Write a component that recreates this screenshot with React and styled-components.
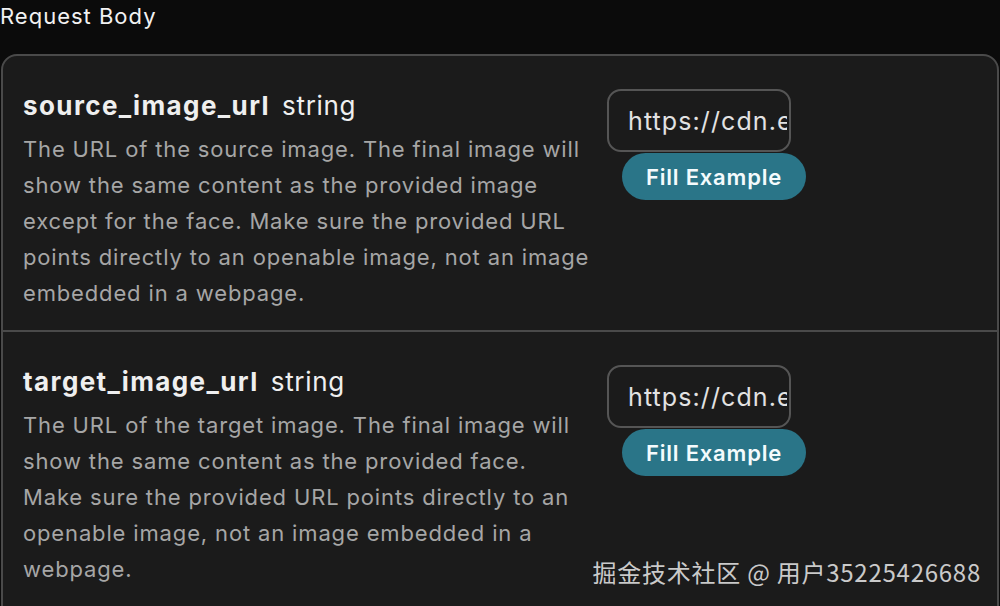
import React from "react";
import styled, { createGlobalStyle } from "styled-components";

const Global = createGlobalStyle`
  html, body { margin: 0; padding: 0; background: #0b0b0b; }
  body { font-family: Inter, "Noto Sans", sans-serif; overflow: hidden; }
  * { box-sizing: border-box; }
`;

const Page = styled.div`
  position: relative;
  width: 1000px;
  height: 606px;
  overflow: hidden;
  background: #0b0b0b;
  padding: 0 1px;
`;

const Heading = styled.div`
  font-size: 22px;
  line-height: 32px;
  letter-spacing: 1px;
  color: #f2f2f2;
  margin-left: -1px;
  margin-bottom: 22px;
`;

const Card = styled.div`
  background: #1b1b1b;
  border: 2px solid #4a4a4a;
  border-radius: 16px;
  overflow: hidden;
  min-height: 640px;
`;

const Row = styled.div`
  display: flex;
  align-items: flex-start;
  gap: 10px;
  padding: 33px 20px 19px 20px;
  & + & { border-top: 2px solid #4a4a4a; }
`;

const Info = styled.div`
  width: 574px;
  flex: none;
`;

const TitleLine = styled.div`
  display: flex;
  align-items: baseline;
  gap: 12px;
  line-height: 34px;
  color: #efefef;
`;

const Name = styled.span`
  font-size: 26px;
  font-weight: 700;
  letter-spacing: 1.4px;
`;

const Type = styled.span`
  font-size: 26px;
  font-weight: 400;
  letter-spacing: 0.7px;
`;

const Desc = styled.p`
  margin: 8px 0 0;
  font-size: 22px;
  line-height: 36px;
  letter-spacing: 0.85px;
  color: #a6a6a6;
`;

const DescLine = styled.span`
  display: block;
  white-space: nowrap;
`;

const Controls = styled.div`
  display: flex;
  flex-direction: column;
  align-items: flex-start;
`;

const UrlInput = styled.input`
  width: 184px;
  height: 63px;
  border: 2px solid #555;
  border-radius: 14px;
  background: #1b1b1b;
  color: #e2e2e2;
  font-family: Inter, "Noto Sans", sans-serif;
  font-size: 25px;
  letter-spacing: 1.1px;
  padding: 0 2px 0 19px;
  outline: none;
`;

const FillButton = styled.button`
  margin: 1px 0 0 15px;
  width: 184px;
  height: 47px;
  border: none;
  border-radius: 24px;
  background: #2a7588;
  color: #f4fbfd;
  font-family: Inter, "Noto Sans", sans-serif;
  font-size: 22px;
  font-weight: 600;
  letter-spacing: 0.8px;
  cursor: pointer;
`;

const Watermark = styled.div`
  position: absolute;
  right: 19px;
  bottom: 19px;
  font-family: "Noto Sans CJK SC", "Noto Sans", sans-serif;
  font-size: 24px;
  line-height: 30px;
  letter-spacing: 0.75px;
  color: rgba(235, 235, 235, 0.85);
  white-space: nowrap;
`;

const fields = [
  {
    name: "source_image_url",
    lines: [
      "The URL of the source image. The final image will",
      "show the same content as the provided image",
      "except for the face. Make sure the provided URL",
      "points directly to an openable image, not an image",
      "embedded in a webpage.",
    ],
  },
  {
    name: "target_image_url",
    lines: [
      "The URL of the target image. The final image will",
      "show the same content as the provided face.",
      "Make sure the provided URL points directly to an",
      "openable image, not an image embedded in a",
      "webpage.",
    ],
  },
];

export default function App() {
  return (
    <Page>
      <Global />
      <Heading>Request Body</Heading>
      <Card>
        {fields.map((f) => (
          <Row key={f.name}>
            <Info>
              <TitleLine>
                <Name>{f.name}</Name>
                <Type>string</Type>
              </TitleLine>
              <Desc>
                {f.lines.map((l, i) => (
                  <DescLine key={i}>{l}</DescLine>
                ))}
              </Desc>
            </Info>
            <Controls>
              <UrlInput readOnly value="https://cdn.example.com/image.jpg" />
              <FillButton>Fill Example</FillButton>
            </Controls>
          </Row>
        ))}
      </Card>
      <Watermark>掘金技术社区 @ 用户35225426688</Watermark>
    </Page>
  );
}
